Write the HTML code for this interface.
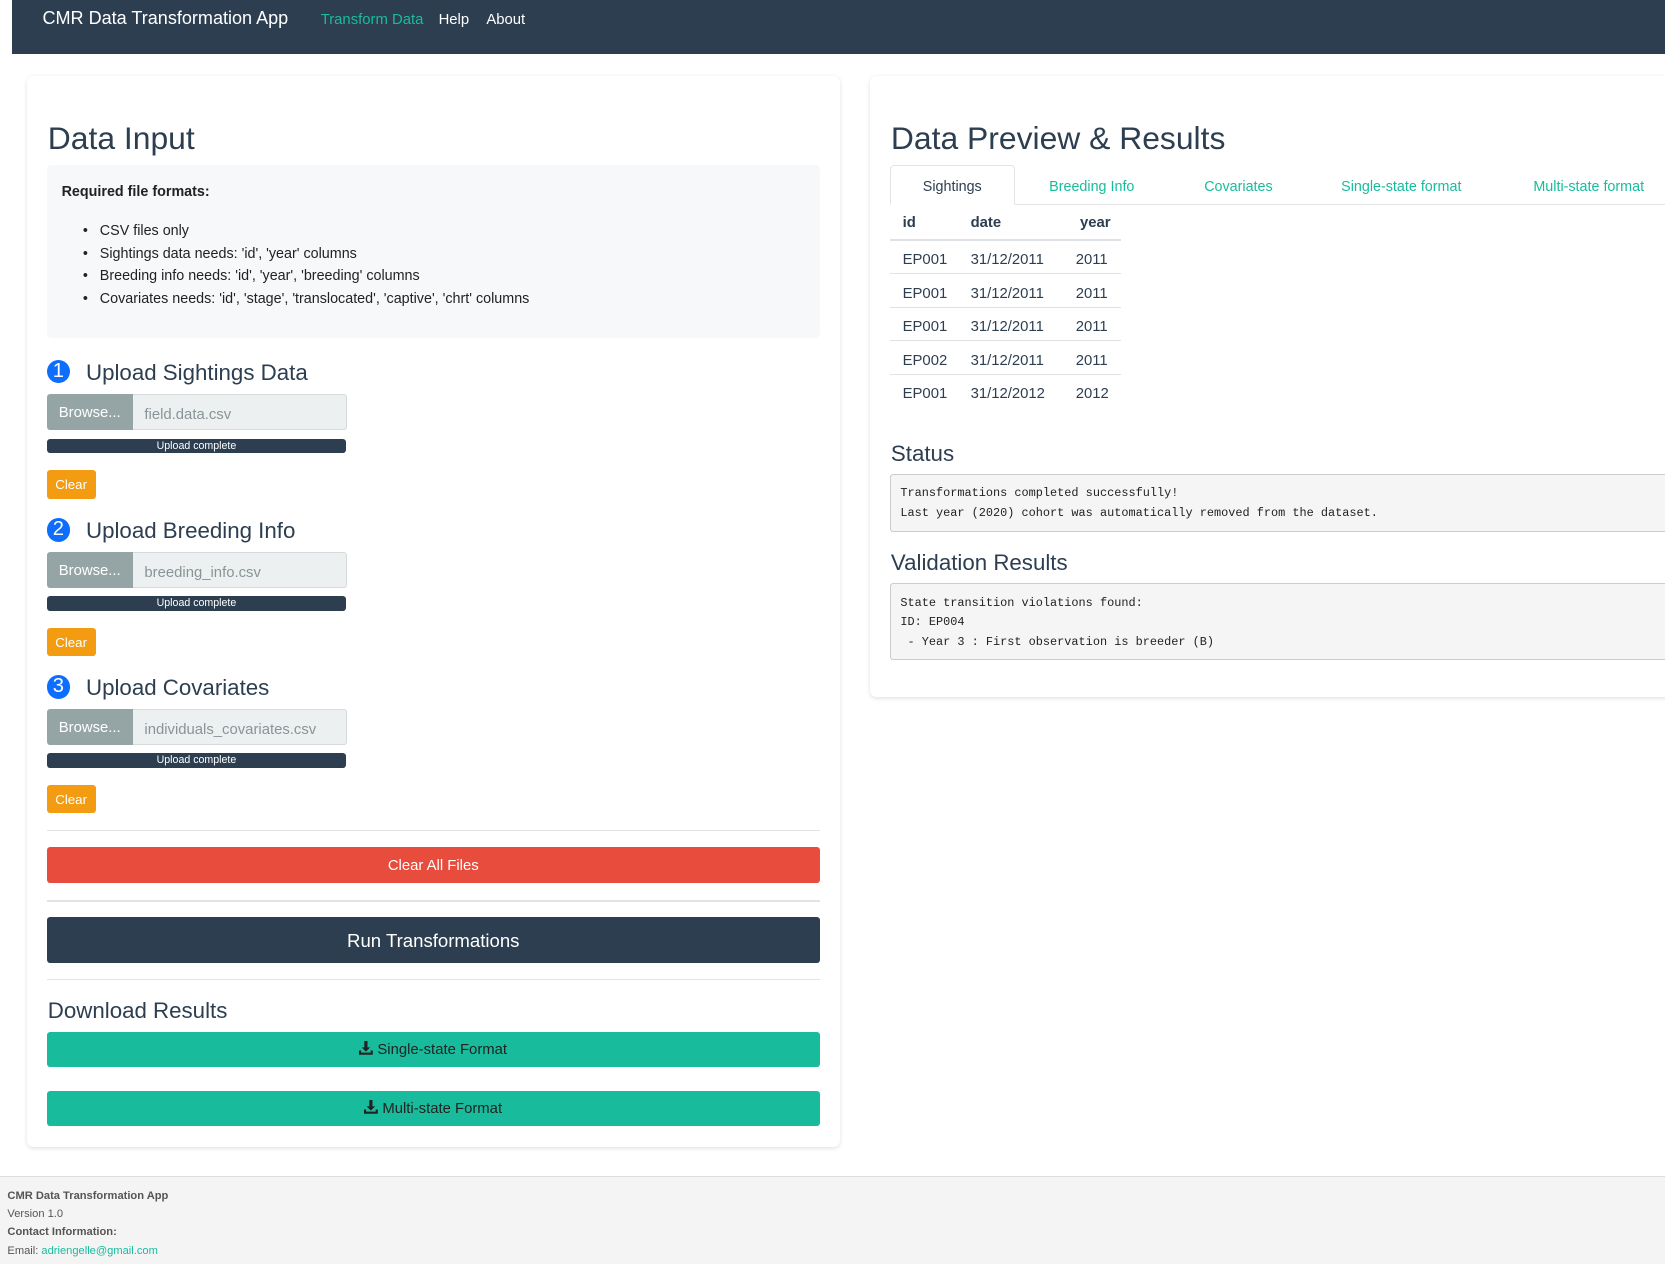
<!DOCTYPE html>
<html><head><meta charset="utf-8">
<style>
html,body{margin:0;padding:0;width:1665px;height:1264px;overflow:hidden;background:#fff;}
#w{zoom:1.0619;position:relative;width:1568px;height:1190px;font-family:"Liberation Sans",sans-serif;color:#2c3e50;}
.a{position:absolute;}
.nav{left:11px;top:0;width:1557px;height:51px;background:#2c3e50;}
.nt{top:8px;font-size:17px;color:#fff;white-space:nowrap;}
.nl{top:11px;font-size:14px;color:#fff;}
.card{background:#fff;border-radius:6px;box-shadow:0 1px 4px rgba(0,0,0,.12);}
.h1{font-size:30px;color:#2c3e50;white-space:nowrap;}
.h3{font-size:21px;color:#2c3e50;white-space:nowrap;}
.circ{width:22px;height:22px;border-radius:50%;background:#0d6efd;color:#fff;font-size:19px;line-height:22px;text-align:center;}
.browse{width:81px;height:34px;background:#95a5a6;color:#fff;font-size:14px;line-height:36px;text-align:center;border-radius:3px 0 0 3px;}
.fld{height:32px;background:#ecf0f1;border:1px solid #d5dbdb;border-left:none;color:#8a9496;font-size:14px;line-height:38px;padding-left:11px;box-sizing:content-box;border-radius:0 3px 3px 0;white-space:nowrap;overflow:hidden;width:190px;}
.bar{width:282px;height:14px;background:#2c3e50;border-radius:3px;color:#fff;font-size:10px;line-height:15px;text-align:center;}
.clr{width:46px;height:27px;background:#f39c12;color:#fff;font-size:12.5px;line-height:28px;text-align:center;border-radius:3px;}
.hr{height:1px;background:#e3e3e3;left:44px;width:728px;}
.btn{left:44px;width:728px;border-radius:3px;text-align:center;color:#fff;}
.tab{top:169px;font-size:13.5px;color:#18bc9c;white-space:nowrap;}
.td{font-size:14px;color:#2c3e50;}
.row{left:838px;width:218px;height:1px;background:#dee2e6;}
.pre{left:838px;width:740px;background:#f5f5f5;border:1px solid #ccc;border-radius:3px;font-family:"Liberation Mono",monospace;font-size:11.2px;color:#222;}
.pre div{position:absolute;left:9px;white-space:pre;}
.ft{left:7px;font-size:10.5px;color:#555;white-space:nowrap;}
</style></head><body><div id="w">
<div class="a nav"></div>
<div class="a nt" style="left:40px">CMR Data Transformation App</div>
<div class="a nl" style="left:302px;color:#18bc9c">Transform Data</div>
<div class="a nl" style="left:413px">Help</div>
<div class="a nl" style="left:458px">About</div>

<div class="a card" style="left:25px;top:72px;width:766px;height:1008px"></div>
<div class="a h1" style="left:45px;top:113px">Data Input</div>
<div class="a" style="left:44px;top:155px;width:728px;height:163px;background:#f7f8f9;border-radius:4px"></div>
<div class="a" style="left:58px;top:173px;font-size:13.5px;font-weight:bold;color:#222">Required file formats:</div>
<div class="a" style="left:78px;top:207px;font-size:13.5px;color:#222;line-height:21.5px;white-space:nowrap">
&bull;&nbsp;&nbsp;&nbsp;CSV files only<br>&bull;&nbsp;&nbsp;&nbsp;Sightings data needs: 'id', 'year' columns<br>&bull;&nbsp;&nbsp;&nbsp;Breeding info needs: 'id', 'year', 'breeding' columns<br>&bull;&nbsp;&nbsp;&nbsp;Covariates needs: 'id', 'stage', 'translocated', 'captive', 'chrt' columns</div>

<div class="a circ" style="left:44px;top:339px">1</div>
<div class="a h3" style="left:81px;top:339px">Upload Sightings Data</div>
<div class="a browse" style="left:44px;top:371px">Browse...</div>
<div class="a fld" style="left:125px;top:371px">field.data.csv</div>
<div class="a bar" style="left:44px;top:413px">Upload complete</div>
<div class="a clr" style="left:44px;top:443px">Clear</div>

<div class="a circ" style="left:44px;top:488px">2</div>
<div class="a h3" style="left:81px;top:488px">Upload Breeding Info</div>
<div class="a browse" style="left:44px;top:520px">Browse...</div>
<div class="a fld" style="left:125px;top:520px">breeding_info.csv</div>
<div class="a bar" style="left:44px;top:561px">Upload complete</div>
<div class="a clr" style="left:44px;top:591px">Clear</div>

<div class="a circ" style="left:44px;top:636px">3</div>
<div class="a h3" style="left:81px;top:636px">Upload Covariates</div>
<div class="a browse" style="left:44px;top:668px">Browse...</div>
<div class="a fld" style="left:125px;top:668px">individuals_covariates.csv</div>
<div class="a bar" style="left:44px;top:709px">Upload complete</div>
<div class="a clr" style="left:44px;top:739px">Clear</div>

<div class="a hr" style="top:782px"></div>
<div class="a btn" style="top:798px;height:34px;line-height:36px;background:#e74c3c;font-size:14px">Clear All Files</div>
<div class="a hr" style="top:848px"></div>
<div class="a btn" style="top:864px;height:43px;line-height:45px;background:#2c3e50;font-size:17.5px">Run Transformations</div>
<div class="a hr" style="top:922px"></div>
<div class="a h3" style="left:45px;top:940px">Download Results</div>
<div class="a btn" style="top:972px;height:33px;line-height:35px;background:#18bc9c;font-size:14px;color:#222"><svg width="13" height="13" viewBox="0 0 13 13" style="vertical-align:-1px"><path d="M5 0h3v6h2.5L6.5 10 2.5 6H5z M0 9h2v2h9V9h2v4H0z" fill="#222"/></svg> Single-state Format</div>
<div class="a btn" style="top:1027px;height:33px;line-height:35px;background:#18bc9c;font-size:14px;color:#222"><svg width="13" height="13" viewBox="0 0 13 13" style="vertical-align:-1px"><path d="M5 0h3v6h2.5L6.5 10 2.5 6H5z M0 9h2v2h9V9h2v4H0z" fill="#222"/></svg> Multi-state Format</div>

<div class="a card" style="left:819px;top:72px;width:760px;height:584px"></div>
<div class="a h1" style="left:839px;top:113px">Data Preview &amp; Results</div>
<div class="a" style="left:838px;top:192px;width:740px;height:1px;background:#e3e3e3"></div>
<div class="a" style="left:838px;top:155px;width:118px;height:38px;border:1px solid #e3e3e3;border-bottom:1px solid #fff;border-radius:4px 4px 0 0;background:#fff;box-sizing:border-box"></div>
<div class="a tab" style="left:869px;color:#2c3e50">Sightings</div>
<div class="a tab" style="left:988px">Breeding Info</div>
<div class="a tab" style="left:1134px">Covariates</div>
<div class="a tab" style="left:1263px">Single-state format</div>
<div class="a tab" style="left:1444px">Multi-state format</div>

<div class="a td" style="left:850px;top:202px;font-weight:bold">id</div>
<div class="a td" style="left:914px;top:202px;font-weight:bold">date</div>
<div class="a td" style="left:1017px;top:202px;font-weight:bold">year</div>
<div class="a row" style="top:225px;height:2px"></div>
<div class="a td" style="left:850px;top:230px;line-height:31.5px">EP001<br>EP001<br>EP001<br>EP002<br>EP001</div>
<div class="a td" style="left:914px;top:230px;line-height:31.5px">31/12/2011<br>31/12/2011<br>31/12/2011<br>31/12/2011<br>31/12/2012</div>
<div class="a td" style="left:1013px;top:230px;line-height:31.5px">2011<br>2011<br>2011<br>2011<br>2012</div>
<div class="a row" style="top:257px"></div>
<div class="a row" style="top:289px"></div>
<div class="a row" style="top:320px"></div>
<div class="a row" style="top:352px"></div>

<div class="a h3" style="left:839px;top:415px">Status</div>
<div class="a pre" style="top:446px;height:53px"><div style="top:11px">Transformations completed successfully!</div><div style="top:30px">Last year (2020) cohort was automatically removed from the dataset.</div></div>
<div class="a h3" style="left:839px;top:518px">Validation Results</div>
<div class="a pre" style="top:549px;height:71px"><div style="top:11px">State transition violations found:</div><div style="top:29px">ID: EP004</div><div style="top:48px"> - Year 3 : First observation is breeder (B)</div></div>

<div class="a" style="left:0;top:1107px;width:1568px;height:83px;background:#f4f4f4;border-top:1px solid #ddd"></div>
<div class="a ft" style="top:1121px;font-weight:bold">CMR Data Transformation App</div>
<div class="a ft" style="top:1138px">Version 1.0</div>
<div class="a ft" style="top:1155px;font-weight:bold">Contact Information:</div>
<div class="a ft" style="top:1172px">Email: <span style="color:#18bc9c">adriengelle@gmail.com</span></div>
</div></body></html>
